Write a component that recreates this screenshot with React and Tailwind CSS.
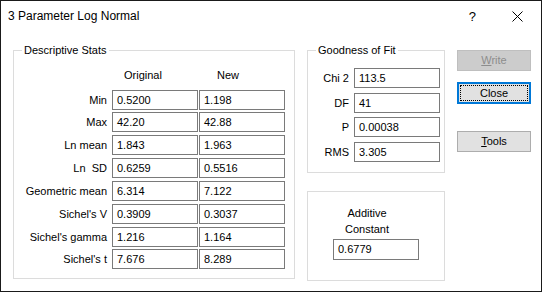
import React from "react";

const descRows = [
  { label: "Min", a: "0.5200", b: "1.198", mt: "mt-0" },
  { label: "Max", a: "42.20", b: "42.88", mt: "mt-[2px]" },
  { label: "Ln mean", a: "1.843", b: "1.963", mt: "mt-[3px]" },
  { label: "Ln  SD", a: "0.6259", b: "0.5516", mt: "mt-[3px]" },
  { label: "Geometric mean", a: "6.314", b: "7.122", mt: "mt-[3px]" },
  { label: "Sichel's V", a: "0.3909", b: "0.3037", mt: "mt-[3px]" },
  { label: "Sichel's gamma", a: "1.216", b: "1.164", mt: "mt-[3px]" },
  { label: "Sichel's t", a: "7.676", b: "8.289", mt: "mt-[2px]" },
];

const fitRows = [
  { label: "Chi 2", v: "113.5", mt: "mt-0" },
  { label: "DF", v: "41", mt: "mt-[5px]" },
  { label: "P", v: "0.00038", mt: "mt-[4px]" },
  { label: "RMS", v: "3.305", mt: "mt-[5px]" },
];

function Box({ children, h = "h-[20px]" }) {
  return (
    <div
      className={`w-[86px] ${h} border border-[#7a7a7a] bg-white pl-[4px] flex items-center text-[11px] text-black leading-none`}
    >
      {children}
    </div>
  );
}

function Group({ title, className, children }) {
  return (
    <div className={`relative border border-[#dcdcdc] ${className}`}>
      <span className="absolute -top-[8px] left-[8px] bg-white px-[2px] leading-[14px] text-[11px] text-black">
        {title}
      </span>
      {children}
    </div>
  );
}

export default function App() {
  return (
    <div className="w-[542px] h-[292px] border border-[#1a1a1a] bg-white flex flex-col font-['Liberation_Sans',Arial,sans-serif] text-[11px] text-black select-none">
      {/* Title bar */}
      <div className="h-[30px] flex items-center pl-[7px] shrink-0">
        <span className="text-[12px] leading-none">3 Parameter Log Normal</span>
        <span className="ml-auto text-[13px] leading-none mr-[36px]">?</span>
        <svg width="11" height="11" viewBox="0 0 11 11" className="mr-[18px]">
          <path d="M0.5 0.5 L10.5 10.5 M10.5 0.5 L0.5 10.5" stroke="#000" strokeWidth="1" fill="none" />
        </svg>
      </div>

      {/* Body */}
      <div className="flex pl-[12px] pt-[19px]">
        {/* Descriptive Stats */}
        <Group title="Descriptive Stats" className="w-[282px] h-[229px] shrink-0">
          <div className="mt-[17px] h-[14px] flex items-center leading-[14px]">
            <div className="w-[98px]" />
            <div className="w-[86px] pl-[12px]">Original</div>
            <div className="w-[86px] ml-[1px] pl-[18px]">New</div>
          </div>
          <div className="mt-[8px] flex flex-col">
            {descRows.map((r) => (
              <div key={r.label} className={`flex items-center ${r.mt}`}>
                <div className="w-[98px] pr-[5px] text-right whitespace-pre leading-none">{r.label}</div>
                <Box>{r.a}</Box>
                <div className="w-[1px]" />
                <Box>{r.b}</Box>
              </div>
            ))}
          </div>
        </Group>

        {/* Middle column */}
        <div className="ml-[12px] w-[138px] flex flex-col shrink-0">
          <Group title="Goodness of Fit" className="h-[123px]">
            <div className="pt-[17px] flex flex-col">
              {fitRows.map((r) => (
                <div key={r.label} className={`flex items-center ${r.mt}`}>
                  <div className="w-[46px] pr-[5px] text-right leading-none">{r.label}</div>
                  <Box>{r.v}</Box>
                </div>
              ))}
            </div>
          </Group>
          <div className="mt-[18px] h-[90px] border border-[#dcdcdc] pt-[13px]">
            <div className="w-[118px] text-center leading-[16px]">
              Additive
              <br />
              Constant
            </div>
            <div className="ml-[25px] mt-[2px]">
              <Box h="h-[21px]">0.6779</Box>
            </div>
          </div>
        </div>

        {/* Buttons */}
        <div className="ml-[12px] w-[74px] flex flex-col shrink-0">
          <div className="h-[21px] border border-[#bfbfbf] bg-[#cccccc] text-[#8c8c8c] flex items-center justify-center leading-none">
            <span>
              <span className="underline">W</span>rite
            </span>
          </div>
          <div className="relative mt-[11px] h-[22px] border-2 border-[#0078d7] bg-[#e1e1e1] flex items-center justify-center leading-none">
            <span className="absolute inset-[1px] border border-dotted border-black" />
            <span>Close</span>
          </div>
          <div className="mt-[27px] h-[21px] border border-[#adadad] bg-[#e1e1e1] flex items-center justify-center leading-none">
            <span>
              <span className="underline">T</span>ools
            </span>
          </div>
        </div>
      </div>
    </div>
  );
}
